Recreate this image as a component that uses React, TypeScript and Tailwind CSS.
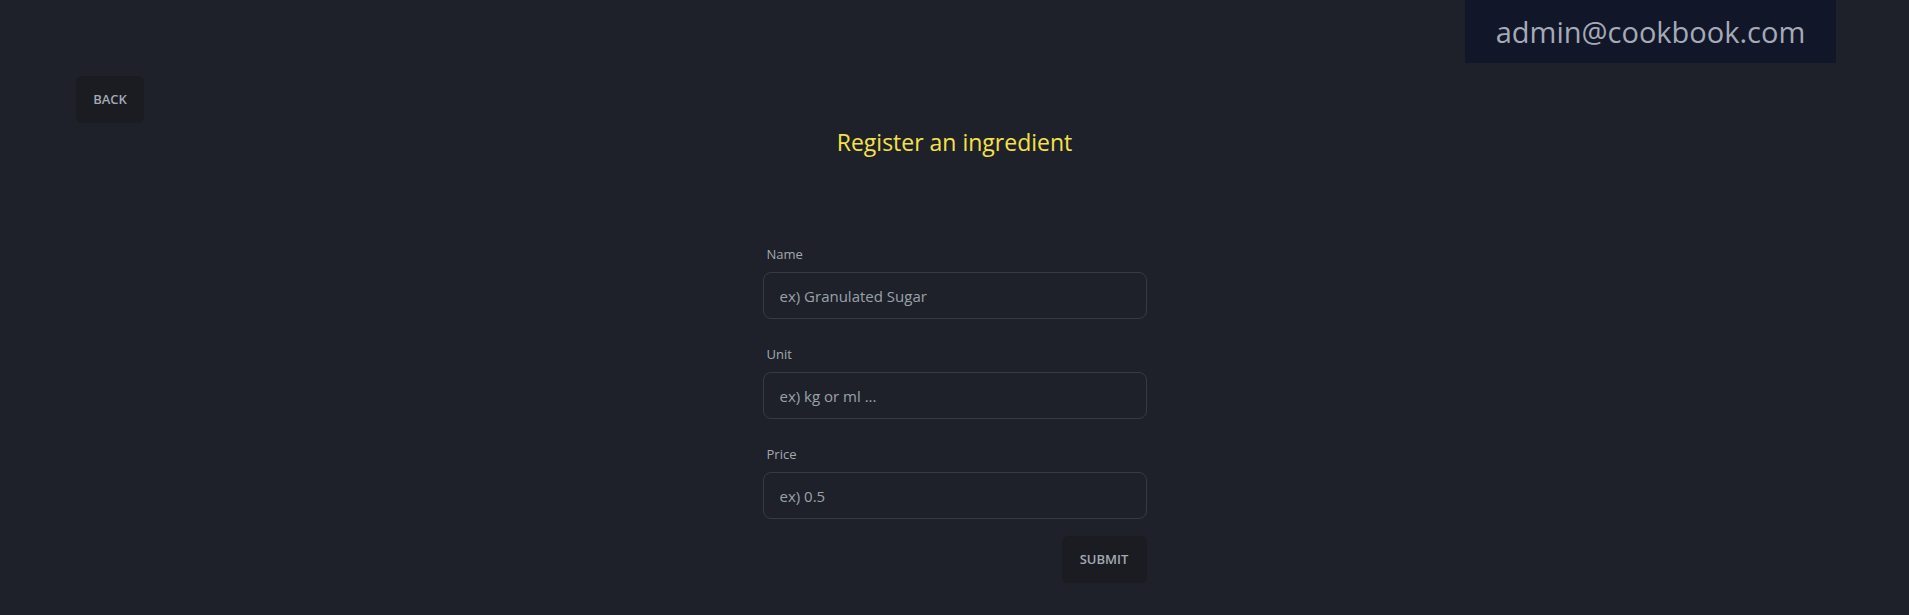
import React from "react";

const font = { fontFamily: '"Open Sans", "Noto Sans", sans-serif' };

function Field({ label, placeholder }: { label: string; placeholder: string }) {
  return (
    <div className="flex flex-col">
      <label className="mb-[9px] pl-1 text-[13px] leading-[18px] text-[#a3a8b0]">
        {label}
      </label>
      <input
        placeholder={placeholder}
        className="h-[47px] w-full rounded-lg border border-[#363a42] bg-transparent px-4 text-[15px] text-[#d1d5db] outline-none placeholder:text-[#9aa1ab]"
      />
    </div>
  );
}

export default function App() {
  return (
    <div className="min-h-screen w-full bg-[#1e2129]" style={font}>
      {/* Header */}
      <div className="flex justify-end pr-[73px]">
        <div className="flex h-[63px] w-[371px] items-center justify-center bg-[#111729] text-[29px] text-[#a4aab6]">
          admin@cookbook.com
        </div>
      </div>

      <div className="pl-[76px] pt-[13px]">
        <button className="h-[47px] w-[68px] rounded-md bg-[#1a1c22] text-[13px] font-semibold text-[#a3a9b3]">
          BACK
        </button>
      </div>

      <h1 className="mt-[4px] text-center text-[23px] leading-[30px] text-[#f5e14b]">
        Register an ingredient
      </h1>

      {/* Form */}
      <div className="mx-auto mt-[88px] flex w-[384px] flex-col gap-[26px]">
        <Field label="Name" placeholder="ex) Granulated Sugar" />
        <Field label="Unit" placeholder="ex) kg or ml ..." />
        <Field label="Price" placeholder="ex) 0.5" />
      </div>
      <div className="mx-auto mt-[17px] flex w-[384px] justify-end">
        <button className="h-[47px] w-[85px] rounded-md bg-[#1a1c22] text-[13px] font-semibold text-[#a3a9b3]">
          SUBMIT
        </button>
      </div>
    </div>
  );
}
